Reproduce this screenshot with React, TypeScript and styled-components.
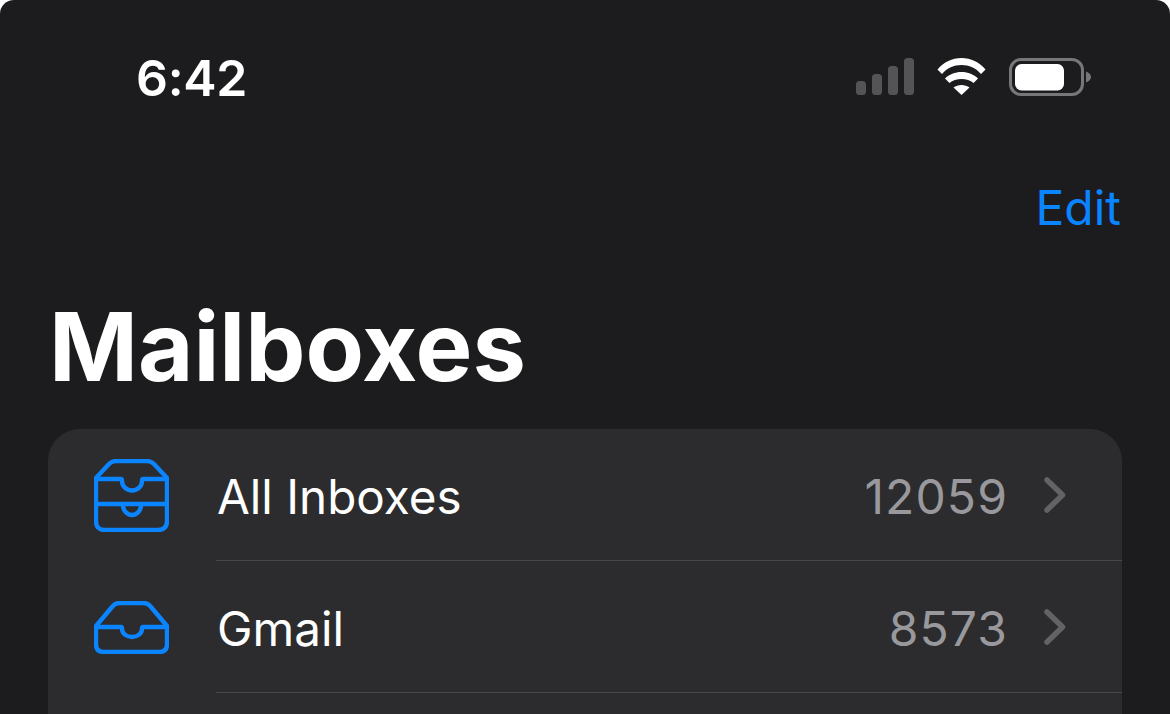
import React from "react";
import styled, { createGlobalStyle } from "styled-components";

const Global = createGlobalStyle`
  html, body { margin: 0; padding: 0; background: #fff; }
  body { width: 1170px; height: 714px; overflow: hidden; font-family: Inter, "Liberation Sans", sans-serif; }
`;

const Phone = styled.div`
  width: 1170px;
  height: 714px;
  overflow: hidden;
  background: #1c1c1e;
  border-radius: 14px 14px 0 0;
  color: #fff;
`;

const StatusBar = styled.div`
  height: 180px;
  box-sizing: border-box;
  padding: 51px 79px 0 136px;
  display: flex;
  justify-content: space-between;
  align-items: flex-start;
`;

const Time = styled.div`
  font-size: 50px;
  line-height: 54px;
  font-weight: 600;
  letter-spacing: -0.3px;
`;

const StatusIcons = styled.div`
  display: flex;
  align-items: flex-start;
  gap: 23px;
  margin-top: 7px;
  svg { display: block; }
`;

const NavRow = styled.div`
  display: flex;
  justify-content: flex-end;
  padding-right: 49px;
  height: 116px;
`;

const EditLink = styled.div`
  color: #0a84ff;
  font-size: 48px;
  line-height: 56px;
`;

const Title = styled.h1`
  margin: 0;
  padding-left: 49px;
  font-size: 95.5px;
  line-height: 100px;
  font-weight: 700;
  height: 133px;
  box-sizing: border-box;
`;

const Card = styled.div`
  margin: 0 48px;
  background: #2c2c2e;
  border-radius: 32px 32px 0 0;
`;

const Row = styled.div`
  height: 132px;
  display: flex;
  align-items: center;
`;

const IconCell = styled.div`
  width: 168px;
  box-sizing: border-box;
  padding-left: 46px;
  svg { display: block; }
`;

const RowBody = styled.div`
  flex: 1;
  height: 100%;
  display: flex;
  align-items: center;
  padding-right: 56px;
  box-shadow: inset 0 -1px 0 #48484a;
`;

const Label = styled.div`
  flex: 1;
  padding-left: 1px;
  margin-top: 3px;
  font-size: 47.6px;
  line-height: 56px;
`;

const Count = styled.div`
  color: #98989d;
  font-size: 48px;
  line-height: 56px;
  letter-spacing: 1.1px;
  margin: 3px 36px 0 0;
`;

const Chevron = () => (
  <svg width="22" height="36" viewBox="0 0 22 36" fill="none">
    <path d="M3 3 L18.5 18 L3 33" stroke="#636366" strokeWidth="5.5" strokeLinecap="round" strokeLinejoin="round" />
  </svg>
);

const Signal = () => (
  <svg width="58" height="37" viewBox="0 0 58 37" fill="#545456">
    <rect x="0" y="23" width="10" height="14" rx="3.5" />
    <rect x="16" y="16" width="10" height="21" rx="3.5" />
    <rect x="32" y="8" width="10" height="29" rx="3.5" />
    <rect x="48" y="0" width="10" height="37" rx="3.5" />
  </svg>
);

const Wifi = () => (
  <svg width="49" height="37" viewBox="0 0 49 37" fill="#fff">
    <path d="M0.5 11.5 C7 4 15 0 24.5 0 C34 0 42 4 48.5 11.5 L44 16 C39 10 32 7 24.5 7 C17 7 10 10 5 16 Z" />
    <path d="M8 20.5 C12 16.5 18 14 24.5 14 C31 14 37 16.5 41 20.5 L36.5 25 C33.5 22.5 29 21 24.5 21 C20 21 15.5 22.5 12.5 25 Z" />
    <path d="M24.5 37 L16.5 29.5 C18.5 28 21.5 27 24.5 27 C27.5 27 30.5 28 32.5 29.5 Z" />
  </svg>
);

const Battery = () => (
  <svg width="82" height="38" viewBox="0 0 82 38" fill="none">
    <rect x="1.5" y="1.5" width="72" height="35" rx="10.5" stroke="#77777a" strokeWidth="3" />
    <rect x="6" y="6" width="49" height="26.5" rx="6.5" fill="#fff" />
    <path d="M77 13.5 C80 14.5 82 16.5 82 19 C82 21.5 80 23.5 77 24.5 Z" fill="#77777a" />
  </svg>
);

const DoubleTray = () => (
  <svg width="75" height="73" viewBox="0 0 75 73" fill="none" stroke="#0a84ff" strokeWidth="4.4" strokeLinejoin="round">
    <path d="M2 19 L15 5 Q18 2 22 2 L53 2 Q57 2 60 5 L73 19 V62 Q73 71 64 71 H11 Q2 71 2 62 Z" />
    <path d="M2 20 H27 Q28 20 28 22 A10 9.5 0 0 0 48 22 Q48 20 49 20 H73" />
    <path d="M2 45 H73" />
    <path d="M29 46 A9 10 0 0 0 47 46" />
  </svg>
);

const SingleTray = () => (
  <svg width="75" height="53" viewBox="0 0 75 53" fill="none" stroke="#0a84ff" strokeWidth="4.4" strokeLinejoin="round">
    <path d="M2 25 L18 6 Q21 2 26 2 L49 2 Q54 2 57 6 L73 25 V43 Q73 51 65 51 H10 Q2 51 2 43 Z" />
    <path d="M2 26 H27 Q28 26 28 28 A10 8 0 0 0 48 28 Q48 26 49 26 H73" />
  </svg>
);

const rows = [
  { icon: <DoubleTray />, label: "All Inboxes", count: "12059" },
  { icon: <SingleTray />, label: "Gmail", count: "8573" },
  { icon: null, label: "", count: "" },
];

export default function App() {
  return (
    <>
      <Global />
      <Phone>
        <StatusBar>
          <Time>6:42</Time>
          <StatusIcons>
            <Signal />
            <Wifi />
            <Battery />
          </StatusIcons>
        </StatusBar>
        <NavRow>
          <EditLink>Edit</EditLink>
        </NavRow>
        <Title>Mailboxes</Title>
        <Card>
          {rows.map((r, i) => (
            <Row key={i}>
              <IconCell>{r.icon}</IconCell>
              <RowBody>
                <Label>{r.label}</Label>
                <Count>{r.count}</Count>
                {r.count && <Chevron />}
              </RowBody>
            </Row>
          ))}
        </Card>
      </Phone>
    </>
  );
}
